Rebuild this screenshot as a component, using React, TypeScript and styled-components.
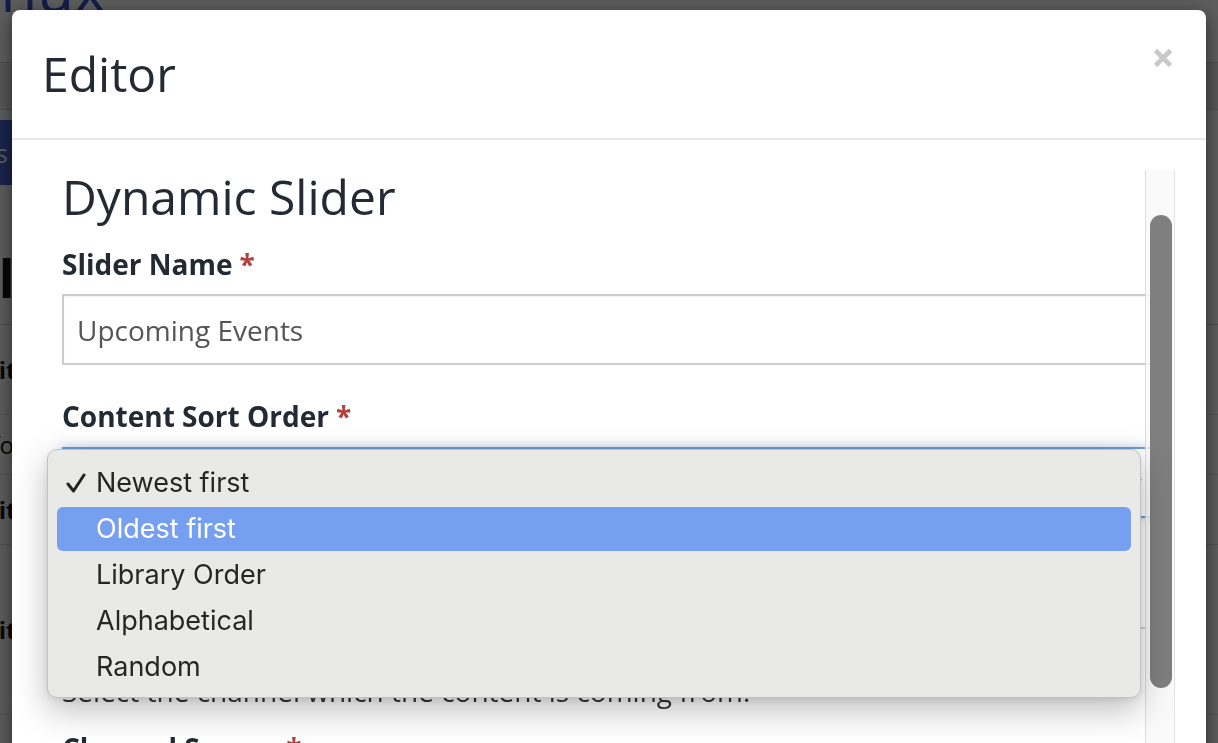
import React from "react";
import styled, { createGlobalStyle } from "styled-components";

const GlobalStyle = createGlobalStyle`
  html, body { margin: 0; padding: 0; height: 100%; overflow: hidden; background: #fff; }
  body { font-family: "Open Sans", "Liberation Sans", sans-serif; }
  *, *::before, *::after { box-sizing: border-box; }
`;

/* ---------- background page (dimmed behind modal) ---------- */
const Page = styled.div`
  width: 1218px;
  height: 743px;
  overflow: hidden;
  background: #fff;
  color: #111;
`;
const SiteHeader = styled.header`
  height: 62px;
  overflow: hidden;
  display: flex;
  align-items: flex-start;
`;
const Logo = styled.div`
  font-size: 60px;
  line-height: 1;
  color: #3550c8;
  margin-top: -41px;
  margin-left: -70px;
`;
const Nav = styled.nav`
  height: 48px;
  background: #ececec;
  border-top: 1px solid #d0d0d0;
  border-bottom: 1px solid #d0d0d0;
`;
const Toolbar = styled.div`
  height: 90px;
  padding-top: 10px;
  display: flex;
  align-items: flex-start;
`;
const PrimaryButton = styled.div`
  width: 120px;
  height: 65px;
  margin-left: -108px;
  background: #4663d4;
  color: #fff;
  font-size: 26px;
  display: flex;
  align-items: center;
  justify-content: flex-end;
  padding-right: 4px;
`;
const PageTitle = styled.h1`
  margin: 0;
  height: 125px;
  padding-top: 52px;
  font-size: 52px;
  font-weight: 700;
  line-height: 1;
  text-indent: -30px;
  border-bottom: 1px solid #cfcfcf;
`;
const Row = styled.div<{ $h: number }>`
  height: ${(p) => p.$h}px;
  display: flex;
  align-items: center;
  border-bottom: 1px solid #dedede;
  font-size: 24px;
`;
const RowText = styled.span<{ $bold?: boolean; $shift: number }>`
  font-weight: ${(p) => (p.$bold ? 700 : 400)};
  margin-left: ${(p) => p.$shift}px;
`;

/* ---------- modal ---------- */
const Backdrop = styled.div`
  position: fixed;
  inset: 0;
  background: rgba(0, 0, 0, 0.64);
`;
const ModalLayer = styled.div`
  position: fixed;
  inset: 0;
  padding: 10px 12px 0;
  overflow: hidden;
`;
const Modal = styled.div`
  height: 820px;
  background: #fff;
  border-radius: 8px;
  box-shadow: 0 5px 18px rgba(0, 0, 0, 0.55);
  display: flex;
  flex-direction: column;
  overflow: hidden;
`;
const ModalHeader = styled.div`
  flex-shrink: 0;
  height: 130px;
  padding: 35px 33px 0 30px;
  border-bottom: 2px solid #e8e8e8;
  display: flex;
  justify-content: space-between;
  align-items: flex-start;
`;
const ModalTitle = styled.h4`
  margin: 0;
  font-size: 48px;
  font-weight: 400;
  line-height: 1.2;
  color: #232a33;
`;
const CloseButton = styled.button`
  margin-top: 3px;
  width: 20px;
  height: 20px;
  padding: 0;
  border: 0;
  background: none;
  display: flex;
`;
const ModalBody = styled.div`
  position: relative;
  flex: 1;
  padding: 30px 51px 0 50px;
`;
const Heading = styled.h2`
  margin: -2px 0 22px;
  font-size: 48px;
  font-weight: 400;
  line-height: 1.2;
  color: #232a33;
`;
const FieldGroup = styled.div<{ $gap: number }>`
  margin-bottom: ${(p) => p.$gap}px;
`;
const Label = styled.label<{ $mb?: number }>`
  display: block;
  font-size: 28px;
  font-weight: 700;
  line-height: 1.2;
  color: #232a33;
  margin-bottom: ${(p) => (p.$mb ?? 13)}px;
`;
const Required = styled.span`
  color: #b2403c;
  margin-left: 7px;
`;
const TextInput = styled.div`
  height: 71px;
  border: 2px solid #cccccc;
  box-shadow: inset 0 1px 2px rgba(0, 0, 0, 0.06);
  padding: 0 13px;
  display: flex;
  align-items: center;
  font-size: 28px;
  color: #555;
`;
const SelectWrap = styled.div`
  position: relative;
`;
const SelectBox = styled.div`
  height: 71px;
  border: 2px solid #6f9bd2;
  box-shadow: 0 0 10px rgba(90, 140, 210, 0.35);
  padding: 0 10px 0 13px;
  display: flex;
  align-items: center;
  justify-content: space-between;
  font-size: 28px;
  color: #555;
`;
const OptionsSection = styled.div`
  height: 111px;
  padding-top: 40px;
  border-bottom: 2px solid #cfcfcf;
  margin-bottom: 11px;
  display: flex;
  align-items: flex-start;
  gap: 12px;
  font-size: 28px;
  color: #333;
`;
const CheckBox = styled.span`
  width: 24px;
  height: 24px;
  margin-top: 6px;
  border: 2px solid #999;
  border-radius: 3px;
`;
const HelpText = styled.p`
  margin: 0 0 23px;
  font-size: 28px;
  line-height: 1.2;
  color: #333;
`;

/* scrollbar overlay */
const ScrollTrack = styled.div`
  position: absolute;
  top: 30px;
  right: 31px;
  bottom: 0;
  width: 30px;
  background: rgba(249, 249, 249, 0.82);
  border-left: 1px solid #dcdcdc;
  border-right: 1px solid #e4e4e4;
  padding: 45px 0 0 4px;
`;
const ScrollThumb = styled.div`
  width: 22px;
  height: 473px;
  border-radius: 11px;
  background: #7f7f7f;
`;

/* native select popup */
const Dropdown = styled.div`
  position: absolute;
  top: 2px;
  left: -15px;
  width: 1094px;
  padding: 11px 9px 8px;
  display: flex;
  flex-direction: column;
  gap: 2px;
  background: #e9eae8;
  border: 1px solid #c2c2c2;
  border-radius: 10px;
  box-shadow: 0 12px 34px rgba(0, 0, 0, 0.26), 0 2px 6px rgba(0, 0, 0, 0.08);
  z-index: 5;
`;
const Option = styled.div<{ $active?: boolean }>`
  height: 44px;
  border-radius: 6px;
  display: flex;
  align-items: center;
  font-family: Inter, "Liberation Sans", sans-serif;
  font-size: 27px;
  color: ${(p) => (p.$active ? "#fff" : "#262626")};
  background: ${(p) => (p.$active ? "#769ff0" : "transparent")};
`;
const CheckSlot = styled.span`
  width: 39px;
  flex-shrink: 0;
  padding-left: 9px;
  display: flex;
  align-items: center;
`;

const options = ["Newest first", "Oldest first", "Library Order", "Alphabetical", "Random"];

export default function App() {
  return (
    <>
      <GlobalStyle />
      <Page>
        <SiteHeader>
          <Logo>Winux</Logo>
        </SiteHeader>
        <Nav />
        <Toolbar>
          <PrimaryButton>Posts</PrimaryButton>
        </Toolbar>
        <PageTitle>Sliders</PageTitle>
        <Row $h={90}>
          <RowText $bold $shift={-30}>Edit</RowText>
        </Row>
        <Row $h={60}>
          <RowText $shift={-30}>Info</RowText>
        </Row>
        <Row $h={70}>
          <RowText $bold $shift={-30}>Edit</RowText>
        </Row>
        <Row $h={170}>
          <RowText $bold $shift={-30}>Edit</RowText>
        </Row>
      </Page>

      <Backdrop />
      <ModalLayer>
        <Modal>
          <ModalHeader>
            <ModalTitle>Editor</ModalTitle>
            <CloseButton aria-label="Close">
              <svg width="20" height="20" viewBox="0 0 20 20">
                <path d="M2.5 2.5 L17.5 17.5 M17.5 2.5 L2.5 17.5" stroke="#c9c9c9" strokeWidth="4.6" />
              </svg>
            </CloseButton>
          </ModalHeader>
          <ModalBody>
            <Heading>Dynamic Slider</Heading>
            <FieldGroup $gap={35}>
              <Label>
                Slider Name<Required>*</Required>
              </Label>
              <TextInput>Upcoming Events</TextInput>
            </FieldGroup>
            <FieldGroup $gap={0}>
              <Label>
                Content Sort Order<Required>*</Required>
              </Label>
              <SelectWrap>
                <SelectBox>
                  <span>Newest first</span>
                  <svg width="16" height="10" viewBox="0 0 16 10">
                    <path d="M2 2 L8 8 L14 2" stroke="#333" strokeWidth="2" fill="none" />
                  </svg>
                </SelectBox>
                <Dropdown>
                  {options.map((o, i) => (
                    <Option key={o} $active={i === 1}>
                      <CheckSlot>
                        {i === 0 && (
                          <svg width="20" height="20" viewBox="0 0 20 20">
                            <path
                              d="M2 11 L7.5 18 L18 2"
                              stroke="#222"
                              strokeWidth="3"
                              fill="none"
                              strokeLinecap="round"
                              strokeLinejoin="round"
                            />
                          </svg>
                        )}
                      </CheckSlot>
                      {o}
                    </Option>
                  ))}
                </Dropdown>
              </SelectWrap>
            </FieldGroup>
            <OptionsSection>
              <CheckBox />
              <span>Show event dates</span>
            </OptionsSection>
            <Label $mb={2}>
              Channel<Required>*</Required>
            </Label>
            <HelpText>Select the channel which the content is coming from.</HelpText>
            <Label>
              Channel Source<Required>*</Required>
            </Label>
            <ScrollTrack>
              <ScrollThumb />
            </ScrollTrack>
          </ModalBody>
        </Modal>
      </ModalLayer>
    </>
  );
}
